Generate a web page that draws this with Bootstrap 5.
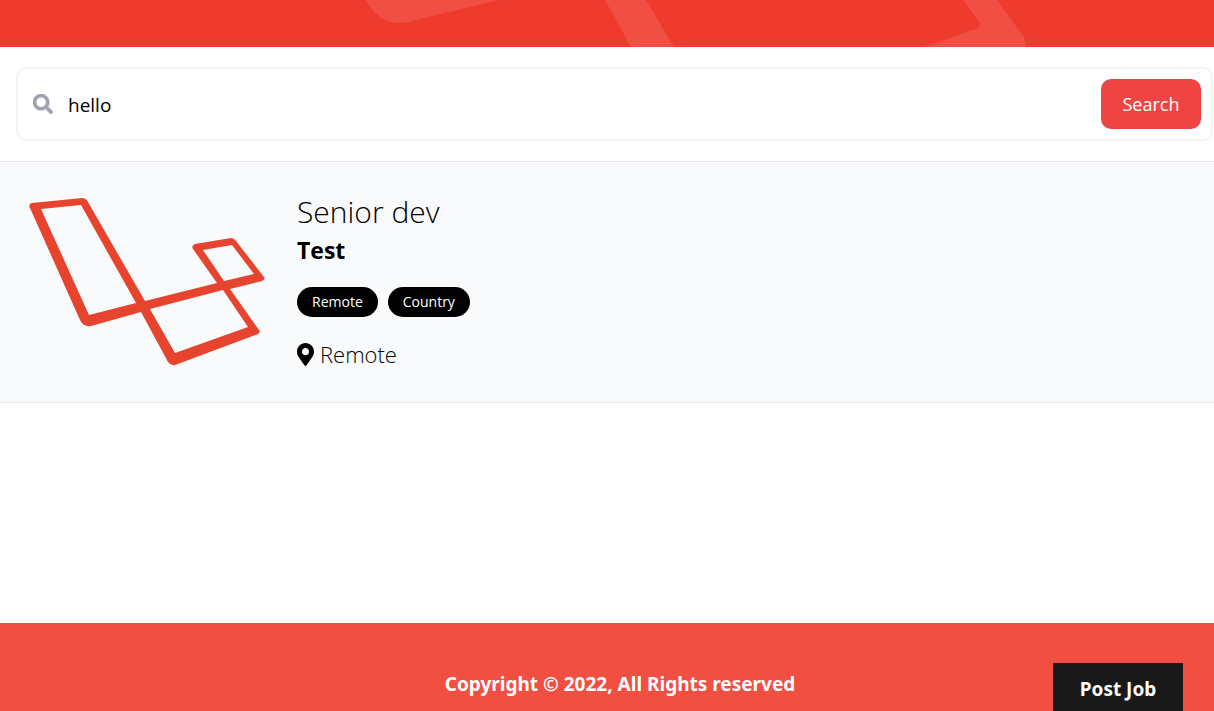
<!DOCTYPE html>
<html lang="en">
<head>
<meta charset="utf-8">
<meta name="viewport" content="width=device-width, initial-scale=1">
<title>Job listings</title>
<link href="https://cdn.jsdelivr.net/npm/bootstrap@5.3.0/dist/css/bootstrap.min.css" rel="stylesheet">
<style>
body { font-family: "Open Sans", "Noto Sans", sans-serif; font-size: 18px; line-height: 30px; color: #000; }
.hero { height: 47px; background: #ef3b2d; }
.hero svg { height: 47px; }
.search-form { margin: 20px 1px 20px 16px; height: 74px; border: 2px solid #f3f4f6; border-radius: 10px; padding: 0 10px 0 15px; }
.search-form .form-control { font-size: 19px; color: #000; padding: 3px 0 0; }
.search-form label { margin-right: 15px; }
.search-form .btn { width: 100px; height: 50px; padding: 0; font-size: 18px; color: #fff; background: #ef4444; border: 0; border-radius: 10px; }
.listing { height: 242px; background: #f9fafb; border-top: 1px solid #e5e7eb; border-bottom: 1px solid #e5e7eb; }
.listing-logo { width: 240px; height: 180px; margin: 30px 30px 0 27px; }
.listing-body { padding-top: 30px; }
.listing-title { font-size: 30px; line-height: 40px; font-weight: 300; color: #000; }
.company { font-size: 23px; line-height: 37px; }
.tags { gap: 10px; margin-top: 18px; }
.tag { font-size: 14px; line-height: 20px; padding: 5px 15px; background: #000; color: #fff; }
.place { font-size: 22px; line-height: 35px; font-weight: 300; gap: 6px; }
.site-footer { height: 88px; background: #f14f42; color: #fff; font-family: "Noto Sans", "Open Sans", sans-serif; font-size: 19px; }
.copyright { padding: 46px 0 0 26px; }
.post-link { top: 40px; right: 31px; bottom: 0; width: 130px; padding-top: 11px; background: #191919; color: #fff; text-align: center; }
</style>
</head>
<body class="d-flex flex-column min-vh-100">
<header class="hero overflow-hidden">
  <svg width="1214" viewBox="0 0 1214 47" fill="#f14f43" aria-hidden="true">
    <path d="M366 0Q379 24 401 23Q408 23 416 20L498 0ZM605 0H646L674 47H631ZM963 0H997L1023 36Q1027 41 1025 47H924L976 29Q982 27 979 22Z"/>
  </svg>
</header>
<main>
  <form class="search-form d-flex align-items-center" role="search" onsubmit="return false">
    <label for="q" class="d-flex"><svg width="20" height="20" viewBox="0 0 512 512" fill="#9ca3af" role="img" aria-label="Search jobs"><path stroke="#9ca3af" stroke-width="14" d="M505 442.700 405.300 343c-4.500-4.500-10.600-7-17-7H372c27.600-35.300 44-79.700 44-128C416 93.100 322.900 0 208 0S0 93.100 0 208s93.100 208 208 208c48.300 0 92.700-16.400 128-44v16.300c0 6.400 2.500 12.500 7 17l99.700 99.700c9.400 9.400 24.600 9.400 33.900 0l28.300-28.300c9.400-9.400 9.400-24.600.1-34zM208 336c-70.700 0-128-57.200-128-128 0-70.700 57.200-128 128-128 70.700 0 128 57.200 128 128 0 70.700-57.200 128-128 128z"/></svg></label>
    <input id="q" class="form-control border-0 shadow-none bg-transparent" type="text" value="hello">
    <button class="btn flex-shrink-0" type="submit">Search</button>
  </form>
  <article class="listing d-flex">
    <svg class="listing-logo flex-shrink-0" viewBox="27 192 240 180" fill="#e74430" fill-rule="evenodd" role="img" aria-label="Company logo">
      <path d="M32 203L82 198Q86 198 88 202L145 301L217 283L193 249Q191 246 195 244L231 238Q234 238 236 241L264 277Q266 279 262 281L230 289L259 330Q261 332 258 334L175 365Q171 366 168 362L141 312L91 326Q83 327 80 320L30 208Q28 204 32 203ZM41 209L89 315L136 303L81 205ZM203 250L224 281L254 274L232 245ZM150 309L175 353L248 327L223 290Z"/>
    </svg>
    <div class="listing-body">
      <h1 class="listing-title m-0">Senior dev</h1>
      <div class="company fw-bold">Test</div>
      <ul class="tags list-unstyled d-flex mb-0">
        <li class="tag rounded-pill">Remote</li>
        <li class="tag rounded-pill">Country</li>
      </ul>
      <div class="place d-flex align-items-center mt-3 pt-1">
        <svg width="17" height="23" viewBox="0 0 384 512" preserveAspectRatio="none" aria-hidden="true"><path d="M172.300 501.700C27 291 0 269.400 0 192 0 86 86 0 192 0s192 86 192 192c0 77.400-27 99-172.300 309.700-9.500 13.800-29.900 13.800-39.400 0zM192 272c44.200 0 80-35.800 80-80s-35.800-80-80-80-80 35.800-80 80 35.800 80 80 80z"/></svg>
        <span>Remote</span>
      </div>
    </div>
  </article>
</main>
<footer class="site-footer position-relative mt-auto fw-bold text-center">
  <p class="copyright m-0">Copyright © 2022, All Rights reserved</p>
  <a class="post-link position-absolute text-decoration-none" href="#">Post Job</a>
</footer>
<script src="https://cdn.jsdelivr.net/npm/bootstrap@5.3.0/dist/js/bootstrap.bundle.min.js"></script>
</body>
</html>
